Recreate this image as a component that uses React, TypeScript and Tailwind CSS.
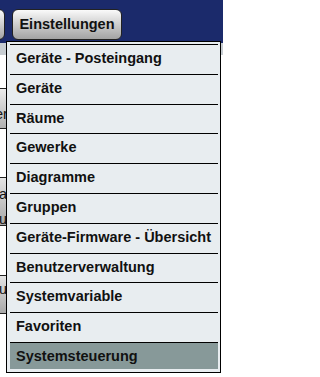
const menuItems = [
  "Geräte - Posteingang",
  "Geräte",
  "Räume",
  "Gewerke",
  "Diagramme",
  "Gruppen",
  "Geräte-Firmware - Übersicht",
  "Benutzerverwaltung",
  "Systemvariable",
  "Favoriten",
  "Systemsteuerung",
];

export default function App() {
  return (
    <div className="relative h-[377px] w-[223px] overflow-hidden bg-white font-['Liberation_Sans',Arial,sans-serif] text-[#111]">
      {/* top bar */}
      <div className="flex h-[43px] items-start gap-[7px] bg-[#1b2a6b] pt-[9px]">
        <div className="-ml-[30px] h-[31px] w-[35px] rounded-[6px] border border-[#222] bg-gradient-to-b from-[#fafafa] to-[#a3a3a3]" />
        <button className="h-[31px] w-[110px] rounded-[6px] border border-[#222] bg-gradient-to-b from-[#fafafa] to-[#a3a3a3] text-center text-[14.5px] font-bold leading-[17px] text-[#111]">
          Einstellungen
        </button>
      </div>
      <div className="h-[12px] bg-[#c7cdd2]" />

      {/* page content behind the menu */}
      <div className="flex w-[120px] flex-col">
        <div className="mt-[33px] h-[41px] border-y border-[#222] bg-gradient-to-b from-[#ececec] to-[#b0b0b0] pt-[17px] text-[14.5px] leading-[17px]">
          <span className="-ml-[5px]">er</span>
        </div>
        <div className="mt-[48px] h-[49px] border-y border-[#222] bg-gradient-to-b from-[#e4e4e4] to-[#a8a8a8] pt-[4px] text-[14.5px] leading-[25px]">
          <div className="-ml-[1px]">ai</div>
          <div className="-ml-[1px]">u</div>
        </div>
        <div className="mt-[49px] h-[39px] border-y border-[#222] bg-gradient-to-b from-[#e4e4e4] to-[#a8a8a8] pt-[5px] text-[14.5px] leading-[17px]">
          <span className="-ml-[1px]">u</span>
        </div>
      </div>

      {/* dropdown menu */}
      <div className="absolute left-[6px] top-[41px] w-[215px] border border-black bg-[#e8edf0] pb-[3px] pl-[3px] pr-[2px] pt-[2px]">
        {menuItems.map((item, i) => {
          const isLast = i === menuItems.length - 1;
          return (
            <div
              key={item}
              className={`border-t border-black pl-[6px] pt-[5px] text-[14.5px] font-bold leading-[17px] whitespace-nowrap ${
                isLast ? "h-[27px] bg-[#879999]" : "h-[29.8px]"
              }`}
            >
              {item}
            </div>
          );
        })}
      </div>
    </div>
  );
}
